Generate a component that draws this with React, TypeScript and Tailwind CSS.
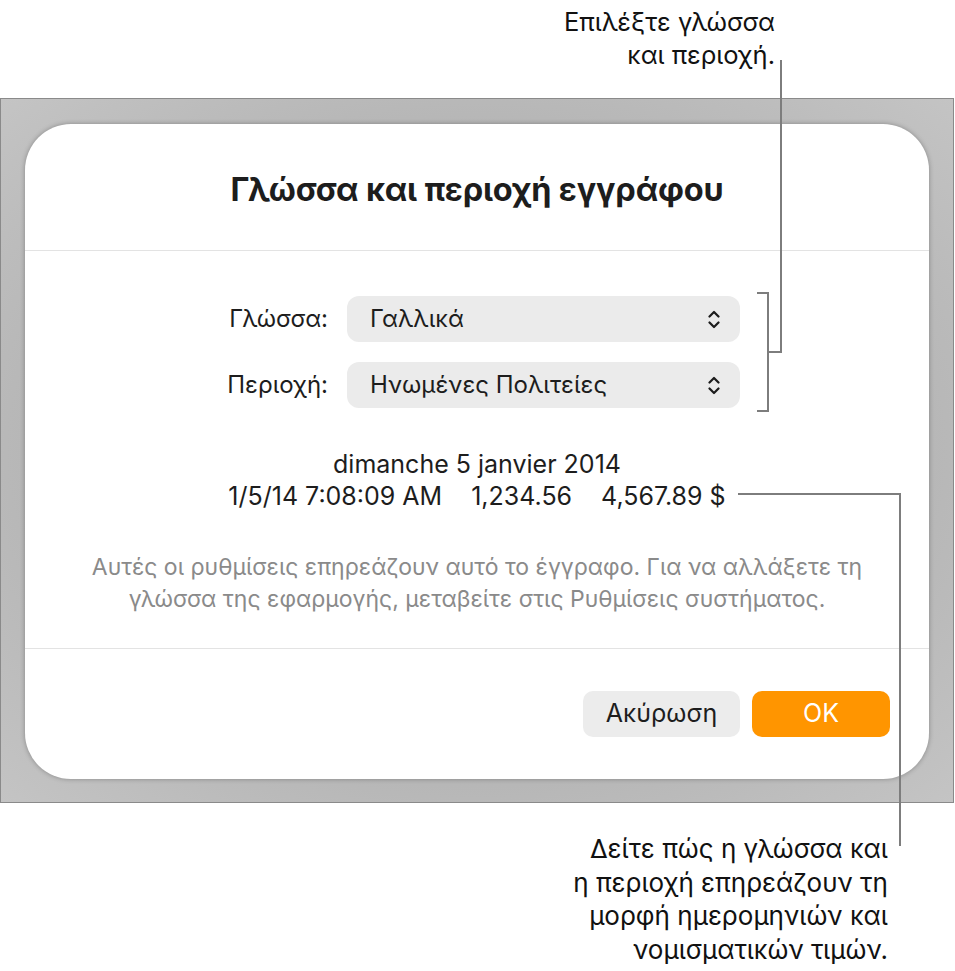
import React from "react";

const FONT = { fontFamily: "Inter, 'Noto Sans', sans-serif" };

type PopupProps = {
  label: string;
  value: string;
};

// stacked up/down chevrons used by the popup buttons
const UpDown = () => (
  <svg width="12" height="19" viewBox="0 0 12 19" fill="none">
    <path
      d="M1.5 6.5 6 2l4.5 4.5M1.5 12.5 6 17l4.5-4.5"
      stroke="#1c1c1c"
      strokeWidth="2.2"
      strokeLinecap="round"
      strokeLinejoin="round"
    />
  </svg>
);

const PopupRow: React.FC<PopupProps> = ({ label, value }) => (
  <div className="flex items-center">
    <div className="w-[303px] text-right text-[24px] text-[#1d1d1d]">{label}</div>
    <div className="ml-[19px] flex h-[46px] w-[393px] items-center justify-between rounded-[12px] bg-[#ebebeb] pl-[23px] pr-[20px]">
      <span className="text-[24px] text-[#1d1d1d]">{value}</span>
      <UpDown />
    </div>
  </div>
);

// callout leader lines drawn on top of the page
const Leaders = () => (
  <svg
    className="pointer-events-none absolute left-0 top-0"
    width="955"
    height="971"
    viewBox="0 0 955 971"
    fill="none"
    stroke="#7d7d7d"
    strokeWidth="2"
  >
    <path d="M781 60V352H768" />
    <path d="M757 293H768V411H757" />
    <path d="M738 494H900V846" />
  </svg>
);

export default function App() {
  return (
    <div className="relative h-[971px] w-[955px] bg-white" style={FONT}>
      {/* top callout */}
      <div className="flex h-[98px] flex-col items-end pr-[180px] pt-[5px] text-[25.5px] leading-[33px] text-[#111]">
        <span>Επιλέξτε γλώσσα</span>
        <span>και περιοχή.</span>
      </div>

      {/* dimmed backdrop holding the sheet */}
      <div className="h-[705px] w-[954px] border border-[#8a8a8a] bg-[radial-gradient(ellipse_at_center,#b2b2b2_55%,#c4c4c4_100%)] px-[24px] pb-[23px] pt-[25px]">
        <div className="flex h-full flex-col rounded-[46px] bg-white shadow-[0_0_5px_rgba(0,0,0,0.3)]">
          <div className="flex h-[126px] items-center justify-center pt-[6px]">
            <h1 className="text-[32.5px] font-bold tracking-[-0.2px] text-[#1d1d1d]">
              Γλώσσα και περιοχή εγγράφου
            </h1>
          </div>
          <div className="h-px bg-[#e3e3e3]" />

          <div className="flex flex-col gap-[20px] pt-[45px]">
            <PopupRow label="Γλώσσα:" value="Γαλλικά" />
            <PopupRow label="Περιοχή:" value="Ηνωμένες Πολιτείες" />
          </div>

          <div className="mt-[40px] flex flex-col items-center text-[25px] leading-[32px] text-[#1d1d1d]">
            <span>dimanche 5 janvier 2014</span>
            <div className="flex gap-[29px]">
              <span>1/5/14 7:08:09 AM</span>
              <span>1,234.56</span>
              <span>4,567.89 $</span>
            </div>
          </div>

          <p className="mt-[39px] text-center text-[23px] leading-[32px] text-[#8a8a8a]">
            Αυτές οι ρυθμίσεις επηρεάζουν αυτό το έγγραφο. Για να αλλάξετε τη
            <br />
            γλώσσα της εφαρμογής, μεταβείτε στις Ρυθμίσεις συστήματος.
          </p>

          <div className="mt-[33px] h-px bg-[#e3e3e3]" />

          <div className="flex justify-end gap-[12px] pr-[39px] pt-[42px]">
            <button className="h-[46px] w-[157px] rounded-[10px] bg-[#ececec] text-[25px] text-[#1d1d1d]">
              Ακύρωση
            </button>
            <button className="h-[46px] w-[138px] rounded-[10px] bg-[#ff9500] text-[25px] text-white">
              OK
            </button>
          </div>
        </div>
      </div>

      {/* bottom callout */}
      <div className="flex flex-col items-end pr-[67px] pt-[29px] text-[26px] leading-[33.5px] text-[#111]">
        <span>Δείτε πώς η γλώσσα και</span>
        <span>η περιοχή επηρεάζουν τη</span>
        <span>μορφή ημερομηνιών και</span>
        <span>νομισματικών τιμών.</span>
      </div>

      <Leaders />
    </div>
  );
}
